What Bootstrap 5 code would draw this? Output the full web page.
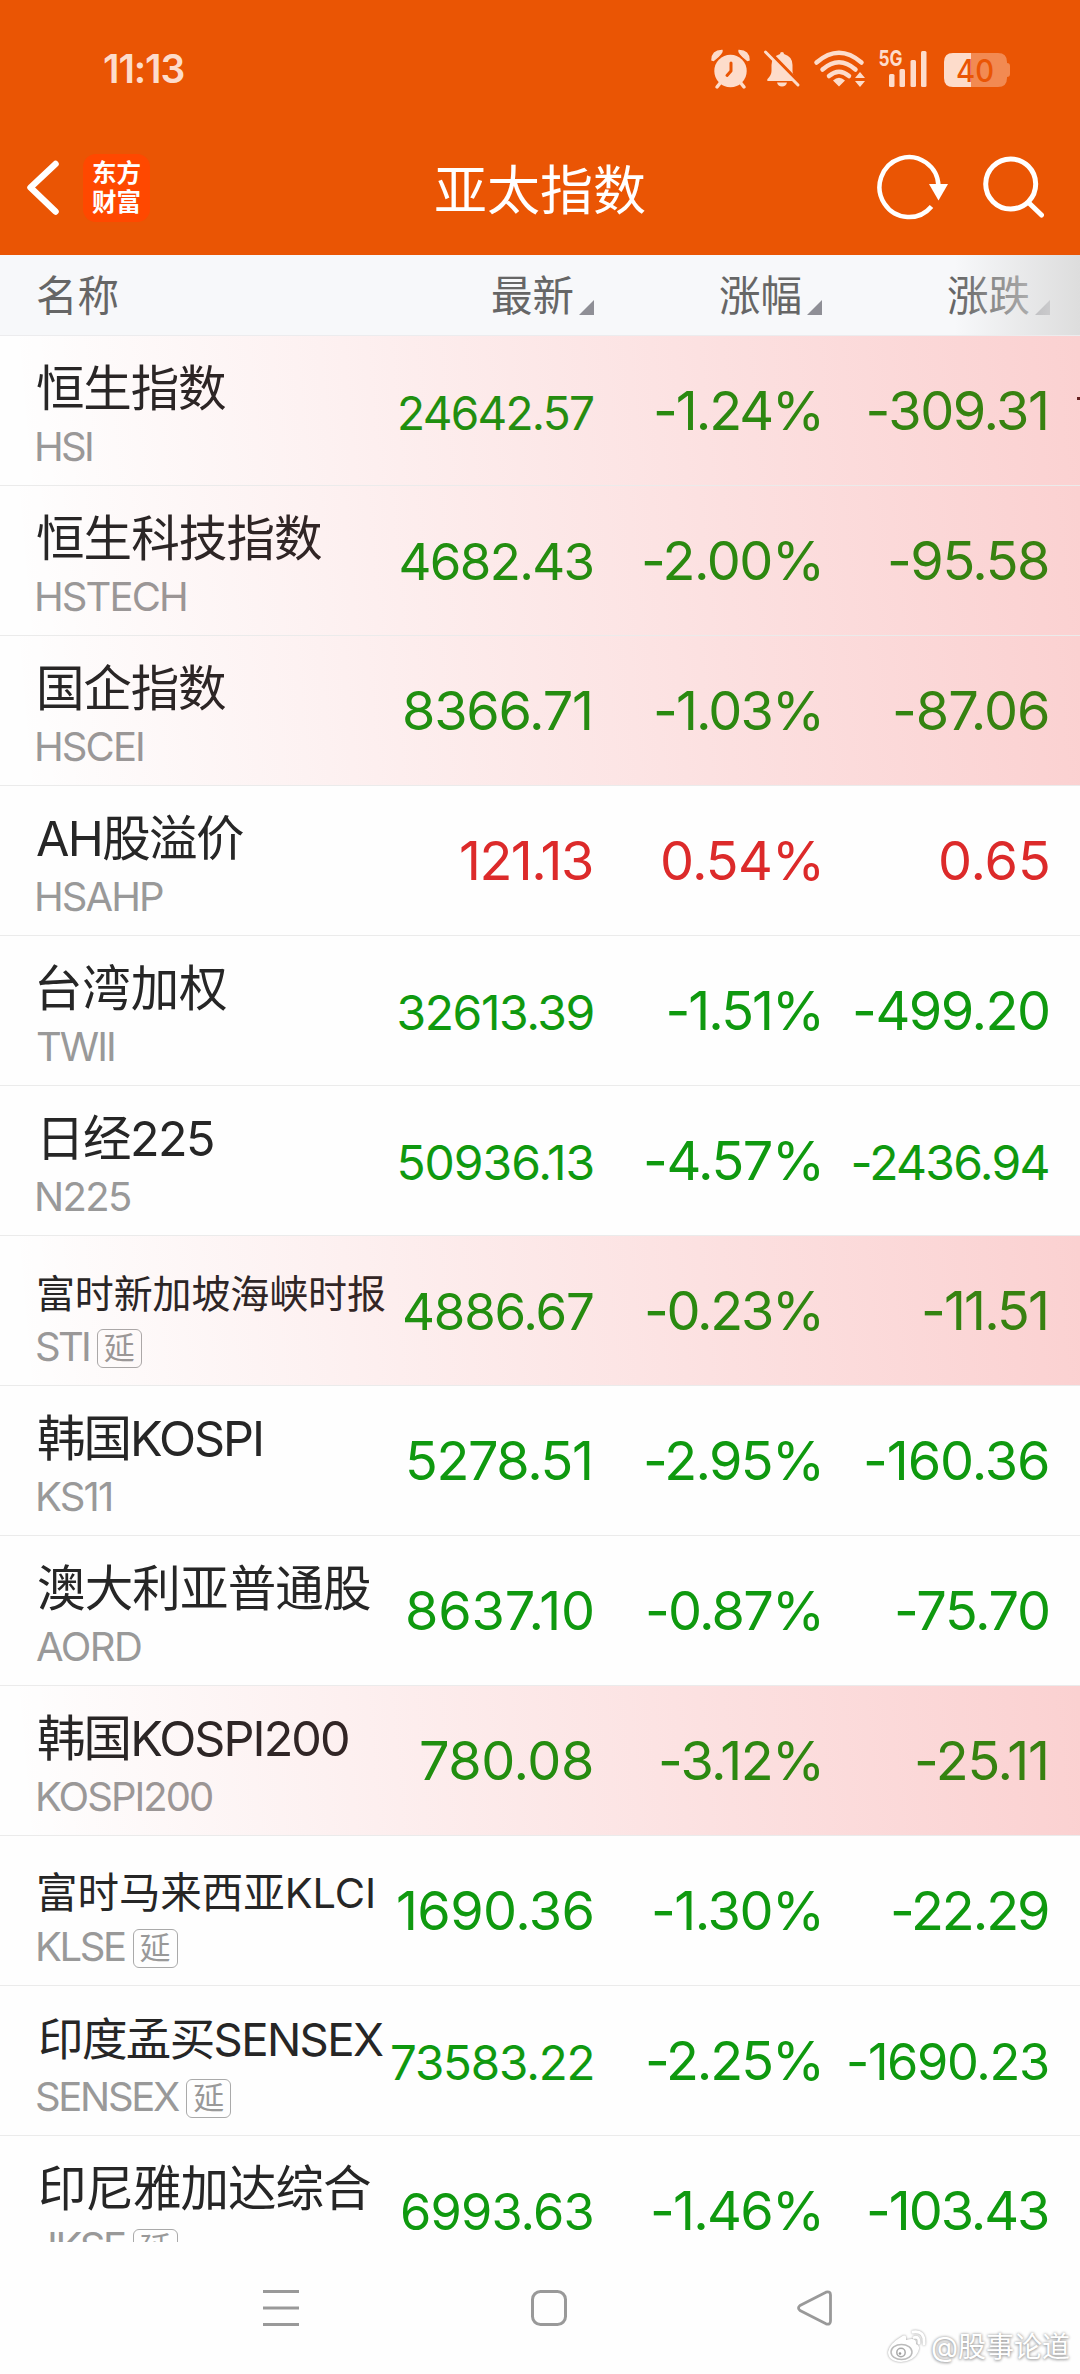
<!DOCTYPE html>
<html lang="zh-CN">
<head>
<meta charset="utf-8">
<meta name="viewport" content="width=device-width, initial-scale=1">
<title>亚太指数</title>
<link href="https://cdn.jsdelivr.net/npm/bootstrap@5.3.0/dist/css/bootstrap.min.css" rel="stylesheet">
<style>
body{width:1080px;height:2374px;overflow:hidden;background:#fefefe;font-family:Inter,"Noto Sans CJK SC",sans-serif;color:#262626}
.app-top{height:255px;background:#ea5504;color:#fff}
.status-bar{height:105px;padding:0 69px 0 103px;color:#fddccb}
.clock{font-size:39px;font-weight:600;line-height:40px;letter-spacing:-1.1px;padding-top:49px}
.status-icons{padding-top:50px}
.title-bar{height:150px;display:grid;grid-template-columns:1fr auto 1fr}
.title-text{font-size:53px;line-height:60px;font-weight:400;padding-top:56px}
.brand-tile{width:67px;height:68px;border-radius:13px;background:#ff4800;font-size:24.5px;line-height:29px;font-weight:700;text-align:center;padding-top:5px;margin-left:-1px}
.left-tools{padding:49px 0 0 27px}
.right-tools{padding:49px 36px 0 0}
.list-head{height:81px;background:#f7f8fa;border-bottom:1px solid #ececee;color:#666;font-size:41.5px;line-height:50px}
.list-head:after{content:"";position:absolute;top:0;right:0;bottom:0;width:125px;background:linear-gradient(90deg,rgba(222,222,222,0),rgba(221,221,221,1))}
.list-head .c-name{padding-top:16px}
.hd{margin-bottom:-2px}
.c-name{width:380px;padding-left:36px;flex:none}
.c-last{width:214px;flex:none}
.c-pct,.c-chg{width:228px;flex:none}
.tri{width:15px;height:15px;background:#8f8f96;clip-path:polygon(100% 0,100% 100%,0 100%);margin:0 0 4px 5px}
.quotes{height:1906px;overflow:hidden}
.quote{height:150px;border-bottom:1px solid #ebebeb;position:relative}
.quote .c-name{padding:23px 0 0 0}
.hot:after{content:"";position:absolute;inset:0;pointer-events:none;background:linear-gradient(85deg,rgba(238,24,24,0) 2%,rgba(238,24,24,.195) 100%)}
.nm{font-size:48px;line-height:60px;height:60px;white-space:nowrap}
.nm.tight{padding-top:2px}
.cd{font-size:40px;line-height:48px;height:48px;margin-top:4px;color:#999;white-space:nowrap;position:relative}
.num{font-size:54px;line-height:60px;height:60px;margin-top:45px;white-space:nowrap}
.nm span,.cd span,.num span{line-height:1}
.down{color:#0f990f}.up{color:#dc2a2a}
.delay{width:45px;height:39px;border:1.5px solid #aaa;border-radius:6px;font-size:31px;line-height:36px;text-align:center;margin-top:6px;flex:none}
.edge-mark{position:absolute;right:0;top:61px;width:3px;height:3px;background:#422}
.nav-keys{height:132px;padding:48px 0 0 263px;background:#fefefe}
.k2{margin-left:232px}.k3{margin-left:230px}
.wm{position:absolute;right:10px;bottom:9px;font-size:28px;line-height:36px;color:#fff;text-shadow:0 0 3px #999,0 1px 3px #aaa}
</style>
<script src="https://cdn.jsdelivr.net/npm/bootstrap@5.3.0/dist/js/bootstrap.bundle.min.js"></script>
</head>
<body class="position-relative m-0">
<header class="app-top">
  <div class="status-bar d-flex justify-content-between align-items-start">
    <div class="clock">11:13</div>
    <svg class="status-icons" width="300" height="90" viewBox="711 50 300 40" style="overflow:visible" fill="#fddccb">
      <!-- alarm clock -->
      <circle cx="730.5" cy="71" r="16.2"/>
      <path d="M712 60 Q712 51 722 50.5 Q723 53 713.500 60.500ZM749 60 Q749 51 739 50.500 Q738 53 747.500 60.500Z" stroke="#fddccb" stroke-width="1.5"/>
      <path d="M721 82l-4 5M740 82l4 5" stroke="#fddccb" stroke-width="3.500" stroke-linecap="round"/>
      <path d="M731 63v8l-4 4.500" fill="none" stroke="#ea5504" stroke-width="3" stroke-linecap="round" stroke-linejoin="round"/>
      <!-- muted bell -->
      <path d="M780 54q0-2 2-2t2 2q8.500 2.500 8.500 11v6q0 4 4 8q1 2-1 2h-27q-2 0-1-2q4-4 4-8v-6q0-8.500 8.500-11zM777 82.500h10q-1 4-5 4t-5-4z"/>
      <path d="M768 51l33 34" stroke="#ea5504" stroke-width="4"/>
      <path d="M765.500 52l32.500 33" stroke="#fddccb" stroke-width="3" stroke-linecap="round"/>
      <!-- wifi -->
      <g fill="none" stroke="#fddccb" stroke-width="4.500" stroke-linecap="round"><path d="M816.500 62.500Q839 43 861.500 62.500M822.500 69.500Q839 55 855.500 69.500M829 76Q839 67.500 849 76"/></g>
      <path d="M833 80.500Q839 75 845 80.500L839 86.500ZM855 78l5-6 5 6zM855 81h10l-5 6z"/>
      <!-- signal -->
      <text x="878.500" y="66" font-size="22" font-weight="700" textLength="24" lengthAdjust="spacingAndGlyphs">5G</text>
      <rect x="889" y="74" width="5.500" height="13" rx="1.500"/><rect x="899.500" y="69" width="5.500" height="18" rx="1.500"/><rect x="910.500" y="60" width="5.500" height="27" rx="1.500"/><rect x="921" y="51" width="5.500" height="36" rx="1.500"/>
      <!-- battery -->
      <path d="M971 53h27q9 0 9 9v1q3 0 3 3v8q0 3-3 3v1q0 9-9 9h-27z" fill="#f28a52"/>
      <path d="M971 53v34h-18q-9 0-9-9v-16q0-9 9-9z"/>
      <text x="956" y="81.500" font-size="31" font-weight="500" fill="#ea5504" textLength="38" lengthAdjust="spacingAndGlyphs">40</text>
    </svg>
  </div>
  <div class="title-bar">
    <div class="left-tools d-flex align-items-start">
      <svg width="57" height="68" viewBox="27 154 57 68" fill="none" stroke="#fff" stroke-width="6.500" stroke-linecap="round" stroke-linejoin="round"><path d="M55.500 164L30.500 187.500L55.500 211.500"/></svg>
      <div class="brand-tile">东方<br>财富</div>
    </div>
    <h1 class="title-text m-0">亚太指数</h1>
    <div class="right-tools d-flex align-items-start justify-content-end">
      <svg width="170" height="70" viewBox="874 154 170 70" fill="none" stroke="#fff" stroke-width="4.500">
        <path d="M938.500 186A29.500 30 0 1 0 931.500 206.500"/>
        <path d="M929 184h19l-9.500 16.500z" fill="#fff" stroke="none"/>
        <circle cx="1010.700" cy="184" r="25" stroke-width="5"/><path d="M1029 203l12.500 12" stroke-width="5" stroke-linecap="round"/>
      </svg>
    </div>
  </div>
</header>
<div class="list-head d-flex position-relative">
  <div class="c-name">名称</div>
  <div class="c-last d-flex justify-content-end align-items-end pb-3"><span class="hd">最新</span><i class="tri"></i></div>
  <div class="c-pct d-flex justify-content-end align-items-end pb-3"><span class="hd">涨幅</span><i class="tri"></i></div>
  <div class="c-chg d-flex justify-content-end align-items-end pb-3"><span class="hd">涨跌</span><i class="tri"></i></div>
</div>
<main class="quotes" id="quotes"></main>
<nav class="nav-keys d-flex align-items-start">
  <svg width="36" height="36" fill="none" stroke="#999" stroke-width="3"><path d="M0 1.500h36M0 18h36M0 34.500h36"/></svg>
  <svg class="k2" width="36" height="36" fill="none" stroke="#999" stroke-width="3"><rect x="1.500" y="1.500" width="33" height="33" rx="8"/></svg>
  <svg class="k3" width="36" height="36" fill="none" stroke="#999" stroke-width="2.800" stroke-linejoin="round"><path d="M3 15.500L29 2.200Q33.500 1 33.500 5V31Q33.500 35 29 33.800L3 20.500Q0 18 3 15.500Z"/></svg>
</nav>
<div class="wm d-flex align-items-center">
  <svg class="me-1" width="40" height="34" viewBox="0 0 40 34" style="filter:drop-shadow(0 0 1px #999)" fill="#fff">
    <path d="M14 7Q20 3 19 10Q30 7 29 14Q34 16 31 22Q27 31 14 32Q1 31 1 22Q3 13 14 7Z"/>
    <ellipse cx="14.500" cy="22" rx="10.500" ry="7.500" fill="none" stroke="#bbb" stroke-width="1.500"/>
    <circle cx="14" cy="22.500" r="4.200" fill="none" stroke="#aaa" stroke-width="1.500"/><circle cx="13" cy="23.500" r="1.300" fill="#999"/>
    <path d="M26 2Q38 0 37 14M27 7.500Q32.500 6 32 13" fill="none" stroke="#fff" stroke-width="2.800" stroke-linecap="round"/>
  </svg><span>@股事论道</span>
</div>
<script>
/* Each text is [string, left ink edge, right ink edge, font size]. */
const rows = [
 [["恒生指数",37,226,48.5],["HSI",37,92],["24642.57",400,593,46],["-1.24%",656,819],["-309.31",868.5,1046],1],
 [["恒生科技指数",37,322,48.5],["HSTECH",37,186],["4682.43",400.5,592.5,51],["-2.00%",644,819],["-95.58",890,1048],1],
 [["国企指数",40,226,48.5],["HSCEI",37,143],["8366.71",405,590],["-1.03%",656,819],["-87.06",895,1048],1],
 [["AH股溢价",37,244,48.5],["HSAHP",37,163],["121.13",461,592],["0.54%",663,819],["0.65",941,1048],0],
 [["台湾加权",38,226,48.5],["TWII",37,114],["32613.39",398.5,592.5,48],["-1.51%",668.5,819],["-499.20",855,1048],0],
 [["日经225",44,213,48.5],["N225",37,130],["50936.13",399.5,592.5,48],["-4.57%",646,819],["-2436.94",853.5,1048.5,48],0],
 [["富时新加坡海峡时报",39,385,39],["STI",37,89],["4886.67",404,593,51],["-0.23%",647,819],["-11.51",924,1046],1,94],
 [["韩国KOSPI",38,261,48.5],["KS11",38,111],["5278.51",409,590],["-2.95%",646,819],["-160.36",866,1048],0],
 [["澳大利亚普通股",38,370,48.5],["AORD",37,141],["8637.10",408,592],["-0.87%",648,819],["-75.70",897,1048],0],
 [["韩国KOSPI200",38,348,48.5],["KOSPI200",38,212],["780.08",421,592],["-3.12%",661,819],["-25.11",917,1046],1],
 [["富时马来西亚KLCI",39,373,41.5],["KLSE",38,125],["1690.36",398,592.5],["-1.30%",654,819],["-22.29",893,1048],0,130.5],
 [["印度孟买SENSEX",40,383,45.5],["SENSEX",37,180],["73583.22",392,592.5,47.5],["-2.25%",648,819],["-1690.23",849,1048,50.5],0,186],
 [["印尼雅加达综合",40,370,48.5],["JKSE",36,125],["6993.63",403,592.5,50.5],["-1.46%",653,819],["-103.43",869,1048],0,131]
];
const ctx = document.createElement("canvas").getContext("2d");
const fam = 'Inter,"Noto Sans CJK SC",sans-serif';
/* Spread the letters so that the ink runs from left to right edge. */
function fitted([text, l, r, size], base, edge) {
  size = size || base;
  ctx.font = `400 ${size}px ${fam}`;
  const m = ctx.measureText(text);
  const ls = (r - l - m.actualBoundingBoxLeft - m.actualBoundingBoxRight) / (text.length - 1);
  const margin = edge
    ? `margin-right:${(edge - r - (m.width - m.actualBoundingBoxRight) - ls).toFixed(2)}px`
    : `margin-left:${(l + m.actualBoundingBoxLeft).toFixed(2)}px;margin-right:${(-ls).toFixed(2)}px`;
  return `<span style="font-size:${size}px;letter-spacing:${ls.toFixed(2)}px;${margin}">${text}</span>`;
}
document.getElementById("quotes").innerHTML = rows.map(([n, c, a, b, d, hot, tag], i) => {
  const tone = b[0][0] === "-" ? "down" : "up";
  return `<div class="quote d-flex${hot ? " hot" : ""}">
    <div class="c-name"><div class="nm${n[3] < 45 ? " tight" : ""}">${fitted(n, 48)}</div>
      <div class="cd d-flex"><div>${fitted(c, 40)}</div>${tag ? `<div class="delay" style="margin-left:${tag - c[2]}px">延</div>` : ""}</div></div>
    <div class="c-last num text-end ${tone}">${fitted(a, 54, 594)}</div>
    <div class="c-pct num text-end ${tone}">${fitted(b, 54, 822)}</div>
    <div class="c-chg num text-end ${tone}">${fitted(d, 54, 1050)}</div>
    ${i ? "" : '<i class="edge-mark"></i>'}</div>`;
}).join("");
</script>
</body>
</html>
